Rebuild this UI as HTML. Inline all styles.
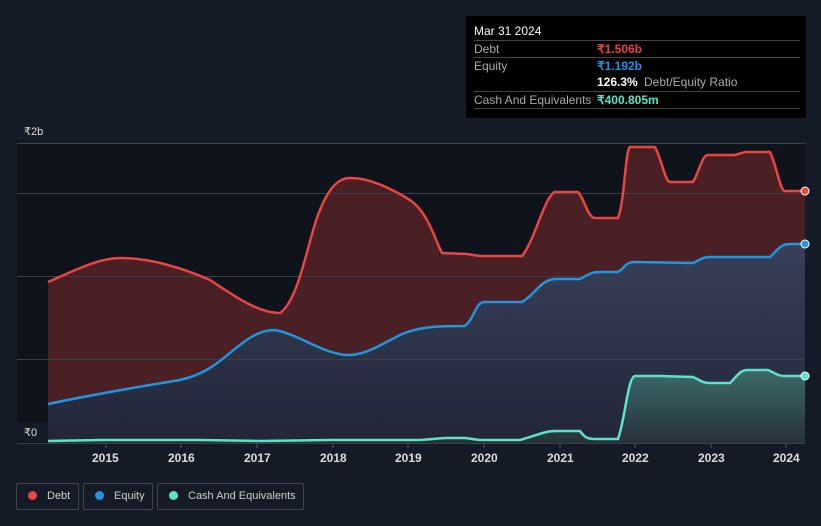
<!DOCTYPE html>
<html><head><style>
body{margin:0;background:#151b26;font-family:"Liberation Sans",sans-serif;width:821px;height:526px;overflow:hidden;position:relative}
.tt{position:absolute;left:466px;top:16px;width:340px;height:102px;background:#000;color:#fff;font-size:12px}
.row{position:absolute;left:8px;right:6px;border-top:1px solid #444;height:16px;line-height:16px}
.lbl{color:#aaa;position:absolute;left:0}
.v{position:absolute;left:123px;font-weight:bold}
.leg{position:absolute;top:483px;height:27px;border:1px solid #444;border-radius:2px;color:#ccc;font-size:11px;line-height:25px;box-sizing:border-box;white-space:nowrap}
.dot{display:inline-block;width:9px;height:9px;border-radius:50%;margin:0 10px 0 11px;vertical-align:-1px}
.yr{position:absolute;top:451px;color:#ddd;font-size:12px;font-weight:bold}
</style></head><body>
<svg width="821" height="526" style="position:absolute;left:0;top:0">
<defs>
<linearGradient id="e" x1="0" y1="0" x2="0" y2="1"><stop offset="0" stop-color="#38405a"/><stop offset="1" stop-color="#222636"/></linearGradient>
<linearGradient id="c" x1="0" y1="0" x2="0" y2="1"><stop offset="0" stop-color="#3e6a6a"/><stop offset="1" stop-color="#253238"/></linearGradient>
</defs>
<rect x="17" y="143" width="788" height="300" fill="#0f131b"/>
<path d="M48,282 C80,268 100,258 120,258 C150,258 180,267 210,280 C240,300 260,313 280,313 C300,300 310,230 320,210 C330,185 340,178 350,178 C370,178 390,188 410,200 C428,212 435,240 442,253 L467,254 L480,256 L522,256 C535,240 545,195 555,192 L578,192 C585,200 588,218 595,218 L618,218 C625,200 625,150 630,147 L655,147 C662,160 665,182 670,182 L693,182 C700,170 702,155 708,155 L735,155 L745,152 L770,152 C778,170 780,191 785,191 L805,191 L805,443 L48,443 Z" fill="#4a2024"/>
<path d="M48,404 C100,393 150,385 180,380 C210,373 220,360 240,345 C255,333 265,330 275,330 C300,335 320,352 345,355 C365,356 380,345 400,335 C420,326 440,326 465,326 C475,318 475,302 485,302 L522,302 C535,295 540,280 555,279 L580,279 C588,275 590,272 600,272 L618,272 C625,268 625,262 635,262 L693,263 C700,260 702,257 710,257 L770,257 C778,250 780,244 790,244 L805,244 L805,443 L48,443 Z" fill="url(#e)"/>
<path d="M48,441 L100,440 L200,440 L260,441 L330,440 L420,440 L445,438 L465,438 L480,440 L520,440 C535,436 545,431 555,431 L580,431 C585,438 588,439 595,439 L618,439 C625,420 628,376 635,376 L660,376 L693,377 C700,380 702,383 710,383 L730,383 C738,375 740,370 748,370 L768,370 C775,373 778,376 785,376 L805,376 L805,443 L48,443 Z" fill="url(#c)"/>
<g stroke="#3a3f4a" stroke-width="1"><line x1="17" y1="143.5" x2="805" y2="143.5"/><line x1="17" y1="193.5" x2="805" y2="193.5"/><line x1="17" y1="276.5" x2="805" y2="276.5"/><line x1="17" y1="359.5" x2="805" y2="359.5"/><line x1="17" y1="443.5" x2="805" y2="443.5"/></g>
<g stroke="#555" stroke-width="1"><line x1="106" y1="443" x2="106" y2="448"/><line x1="181" y1="443" x2="181" y2="448"/><line x1="257" y1="443" x2="257" y2="448"/><line x1="333" y1="443" x2="333" y2="448"/><line x1="408" y1="443" x2="408" y2="448"/><line x1="484" y1="443" x2="484" y2="448"/><line x1="560" y1="443" x2="560" y2="448"/><line x1="635" y1="443" x2="635" y2="448"/><line x1="711" y1="443" x2="711" y2="448"/><line x1="786" y1="443" x2="786" y2="448"/></g>
<path d="M48,282 C80,268 100,258 120,258 C150,258 180,267 210,280 C240,300 260,313 280,313 C300,300 310,230 320,210 C330,185 340,178 350,178 C370,178 390,188 410,200 C428,212 435,240 442,253 L467,254 L480,256 L522,256 C535,240 545,195 555,192 L578,192 C585,200 588,218 595,218 L618,218 C625,200 625,150 630,147 L655,147 C662,160 665,182 670,182 L693,182 C700,170 702,155 708,155 L735,155 L745,152 L770,152 C778,170 780,191 785,191 L805,191" fill="none" stroke="#e84545" stroke-width="2.5"/>
<path d="M48,404 C100,393 150,385 180,380 C210,373 220,360 240,345 C255,333 265,330 275,330 C300,335 320,352 345,355 C365,356 380,345 400,335 C420,326 440,326 465,326 C475,318 475,302 485,302 L522,302 C535,295 540,280 555,279 L580,279 C588,275 590,272 600,272 L618,272 C625,268 625,262 635,262 L693,263 C700,260 702,257 710,257 L770,257 C778,250 780,244 790,244 L805,244" fill="none" stroke="#2394df" stroke-width="2.5"/>
<path d="M48,441 L100,440 L200,440 L260,441 L330,440 L420,440 L445,438 L465,438 L480,440 L520,440 C535,436 545,431 555,431 L580,431 C585,438 588,439 595,439 L618,439 C625,420 628,376 635,376 L660,376 L693,377 C700,380 702,383 710,383 L730,383 C738,375 740,370 748,370 L768,370 C775,373 778,376 785,376 L805,376" fill="none" stroke="#5ee0c9" stroke-width="2.5"/>
<circle cx="805" cy="191" r="4" fill="#e84545" stroke="#fff" stroke-width="1"/>
<circle cx="805" cy="244" r="4" fill="#2394df" stroke="#fff" stroke-width="1"/>
<circle cx="805" cy="376" r="4" fill="#5ee0c9" stroke="#fff" stroke-width="1"/>
<rect x="17" y="422" width="31" height="20" fill="#151b26"/>
<text x="24" y="135" fill="#ddd" font-size="11" font-family="Liberation Sans, sans-serif">₹2b</text>
<text x="24" y="436" fill="#ddd" font-size="11" font-family="Liberation Sans, sans-serif">₹0</text>
</svg>
<div class="yr" style="left:92px">2015</div><div class="yr" style="left:168px">2016</div><div class="yr" style="left:244px">2017</div><div class="yr" style="left:320px">2018</div><div class="yr" style="left:395px">2019</div><div class="yr" style="left:471px">2020</div><div class="yr" style="left:547px">2021</div><div class="yr" style="left:622px">2022</div><div class="yr" style="left:698px">2023</div><div class="yr" style="left:773px">2024</div>
<div class="tt">
<div style="position:absolute;left:8px;top:8px;font-size:12px">Mar 31 2024</div>
<div class="row" style="top:24px"><span class="lbl">Debt</span><span class="v" style="color:#e84545">₹1.506b</span></div>
<div class="row" style="top:41px"><span class="lbl">Equity</span><span class="v" style="color:#2394df">₹1.192b</span></div>
<div class="row" style="top:58px;border-top:none"><span class="v">126.3%</span><span style="position:absolute;left:170px;color:#aaa">Debt/Equity Ratio</span></div>
<div class="row" style="top:75px"><span class="lbl">Cash And Equivalents</span><span class="v" style="color:#5ee0c9">₹400.805m</span></div>
<div class="row" style="top:92px;height:0"></div>
</div>
<div class="leg" style="left:16px;width:63px"><span class="dot" style="background:#e84545"></span>Debt</div>
<div class="leg" style="left:83px;width:70px"><span class="dot" style="background:#2394df"></span>Equity</div>
<div class="leg" style="left:157px;width:147px"><span class="dot" style="background:#5ee0c9"></span>Cash And Equivalents</div>
</body></html>
